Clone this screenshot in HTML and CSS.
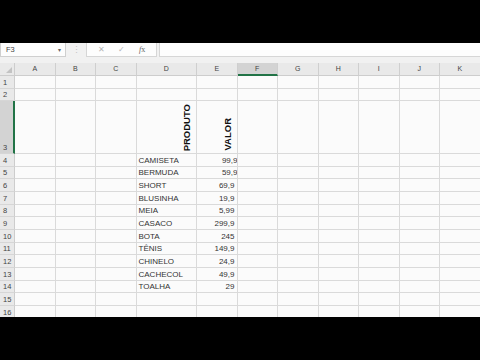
FILE: index.html
```html
<!DOCTYPE html>
<html>
    <head>
        <meta charset="utf-8">
        <title> Planilha | Produtos </title>
        <link rel="stylesheet" href="styles.css">
    </head>

    <body>

        <div class="screen">

            <!-- Barra de formulas -->
            <div class="formulaBar">
                <div class="nameBox">
                    <span>F3</span>
                    <span class="arrow">&#9662;</span>
                </div>
                <div class="dots">&#8942;</div>
                <div class="fxButtons">
                    <span>&#10005;</span>
                    <span>&#10003;</span>
                    <span class="fx"><i>f</i>x</span>
                </div>
                <div class="formulaInput"></div>
            </div>

            <!-- Planilha -->
            <div class="sheet" id="sheet"></div>

        </div>

        <script>
            var cols = ["A","B","C","D","E","F","G","H","I","J","K"];
            var produtos = ["CAMISETA","BERMUDA","SHORT","BLUSINHA","MEIA","CASACO","BOTA","T\u00caNIS","CHINELO","CACHECOL","TOALHA"];
            var valores = ["99,9","59,9","69,9","19,9","5,99","299,9","245","149,9","24,9","49,9","29"];

            var sheet = document.getElementById("sheet");

            function addCell(cls, html){
                var div = document.createElement("div");
                div.className = cls;
                div.innerHTML = html || "";
                sheet.appendChild(div);
            }

            // - cabecalho das colunas
            addCell("corner", "<span class='tri'></span>");
            for(var c = 0; c < cols.length; c++){
                addCell(cols[c] == "F" ? "colHead active" : "colHead", cols[c]);
            }

            // - linhas 1 a 16
            for(var r = 1; r <= 16; r++){
                addCell(r == 3 ? "rowHead active" : "rowHead", r);
                for(var c = 0; c < cols.length; c++){
                    var txt = "";
                    var cls = "cell";
                    if(r == 3 && cols[c] == "D"){ cls += " vertical"; txt = "<span>PRODUTO</span>"; }
                    if(r == 3 && cols[c] == "E"){ cls += " vertical"; txt = "<span>VALOR</span>"; }
                    if(r >= 4 && r <= 14 && cols[c] == "D"){ txt = produtos[r - 4]; }
                    if(r >= 4 && r <= 14 && cols[c] == "E"){
                        cls += " num";
                        if(r <= 5){ cls += " cut"; }
                        txt = "<span>" + valores[r - 4] + "</span>";
                    }
                    addCell(cls, txt);
                }
            }
        </script>
    </body>
</html>
```

FILE: styles.css
```css
body{
    margin: 0;
    background-color: #000;
    overflow: hidden;
    font-family: "Liberation Sans", Arial, sans-serif;
}

.screen{
    margin-top: 43px;
    height: 274px;
    overflow: hidden;
    background-color: #f1f1f1;
}

/* Barra de formulas */

.formulaBar{
    display: flex;
    height: 14px;
    margin-bottom: 6px;
    color: #444;
}

.nameBox{
    width: 66px;
    background: #fdfdfd;
    border: 1px solid #cfcfcf;
    border-top: none;
    box-sizing: border-box;
    display: flex;
    justify-content: space-between;
    align-items: center;
    padding: 0 4px 0 5px;
    font-size: 7.5px;
}

.arrow{
    font-size: 6px;
    color: #666;
}

.dots{
    width: 20px;
    text-align: center;
    color: #c4c4c4;
    font-size: 9px;
    line-height: 14px;
}

.fxButtons{
    width: 71px;
    background: #fdfdfd;
    border: 1px solid #d6d6d6;
    border-top: none;
    box-sizing: border-box;
    display: flex;
    justify-content: space-around;
    align-items: center;
    padding: 0 4px;
    color: #b5b5b5;
    font-size: 8px;
}

.fx{
    color: #666;
    font-family: "Liberation Serif", serif;
    font-size: 8px;
}

.formulaInput{
    flex: 1;
    margin-left: 2px;
    background: #fdfdfd;
    border-left: 1px solid #d6d6d6;
    border-bottom: 1px solid #d6d6d6;
}

/* Planilha */

.sheet{
    display: grid;
    grid-template-columns: 15px 40.5px 40.5px 40.5px 60.5px repeat(7, 40.5px);
    grid-template-rows: 13px 12.5px 12.5px 53px repeat(13, 12.67px);
    background: #fbfbfb;
}

.sheet div{
    box-sizing: border-box;
    overflow: hidden;
    white-space: nowrap;
}

.corner{
    background: #e9e9e9;
    border-right: 1px solid #cdcdcd;
    border-bottom: 1px solid #cdcdcd;
    position: relative;
}

.tri{
    position: absolute;
    right: 2px;
    bottom: 2px;
    width: 0;
    height: 0;
    border-left: 6px solid transparent;
    border-bottom: 6px solid #c3c3c3;
}

.colHead{
    background: #e9e9e9;
    border-right: 1px solid #cfcfcf;
    border-bottom: 1px solid #cdcdcd;
    color: #444;
    font-size: 7px;
    text-align: center;
    line-height: 12px;
}

.colHead.active{
    background: #d3d3d3;
    border-bottom: 2px solid #217346;
}

.rowHead{
    background: #e9e9e9;
    border-right: 1px solid #cdcdcd;
    border-bottom: 1px solid #d6d6d6;
    color: #444;
    font-size: 7.5px;
    padding-left: 3px;
    display: flex;
    align-items: flex-end;
    line-height: 11px;
}

.rowHead.active{
    background: #d3d3d3;
    border-right: 2px solid #217346;
}

.cell{
    border-right: 1px solid #dadada;
    border-bottom: 1px solid #dadada;
    color: #333;
    font-size: 8px;
    padding-left: 2px;
    display: flex;
    align-items: flex-end;
    line-height: 11px;
}

.num{
    justify-content: flex-end;
    padding-right: 2px;
}

.cut span{
    margin-right: -3px;
}

.vertical{
    justify-content: flex-end;
    padding: 0 4px 2px 0;
}

.vertical span{
    writing-mode: vertical-rl;
    transform: rotate(180deg);
    font-weight: bold;
    font-size: 9.5px;
    line-height: 10px;
    color: #111;
}
```
